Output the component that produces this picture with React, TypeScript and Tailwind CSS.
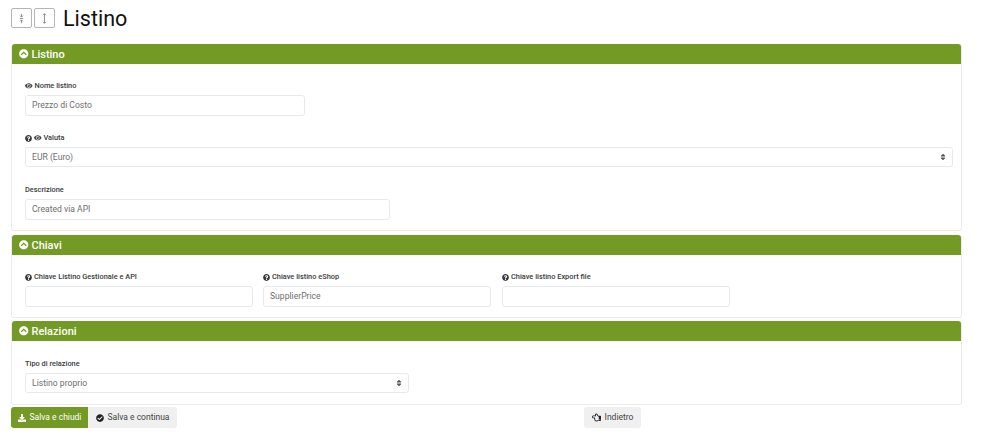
import type { ReactNode } from 'react';
import { FaChevronCircleUp, FaCheckCircle, FaDownload, FaEye, FaQuestionCircle, FaRegHandPointLeft, FaSort } from 'react-icons/fa';

function Panel({ title, className, children }: { title: string; className: string; children: ReactNode }) {
    return (
        <section className={`rounded-[3px] border-x border-b border-[#ececec] bg-white ${className}`}>
            <header className="flex h-[20px] items-center gap-[3px] rounded-t-[3px] bg-[#739a24] pl-[7px] pt-[2px] text-[11px] font-medium text-white">
                <FaChevronCircleUp size={9.5} className="-mt-[2px]" />
                {title}
            </header>
            {children}
        </section>
    );
}

function Label({ help, eye, children }: { help?: boolean; eye?: boolean; children: ReactNode }) {
    return (
        <label className="mb-[4px] flex h-[12px] items-center gap-[2px] pt-[2px] text-[7.4px] font-medium leading-none text-[#3a3a3a]">
            {help && <FaQuestionCircle size={7} />}
            {eye && <FaEye size={7.5} className="text-[#444]" />}
            <span>{children}</span>
        </label>
    );
}

function Field({ value, className, select }: { value?: string; className: string; select?: boolean }) {
    return (
        <div className={`flex items-center justify-between rounded-[3px] border border-[#e8e9ec] bg-white pl-[6px] pr-[5px] text-[8.6px] text-[#6e6e6e] ${className}`}>
            <span>{value}</span>
            {select && <FaSort size={8} className="text-[#555]" />}
        </div>
    );
}

function ToggleIcon({ inward }: { inward?: boolean }) {
    return (
        <svg width="7" height="11" viewBox="0 0 7 11" fill="none" stroke="#777" strokeWidth="0.8">
            {inward ? (
                <>
                    <path d="M3.5 0.8V4M3.5 7V10.2" />
                    <path d="M2 2.6L3.5 4.1L5 2.6" />
                    <path d="M2 8.4L3.5 6.9L5 8.4" />
                    <path d="M1.8 5.5H5.2" />
                </>
            ) : (
                <>
                    <path d="M3.5 0.8V10.2" />
                    <path d="M2 2.2L3.5 0.7L5 2.2" />
                    <path d="M2 8.8L3.5 10.3L5 8.8" />
                </>
            )}
        </svg>
    );
}

export default function App() {
    return (
        <div className="h-[442px] w-[983px] overflow-hidden bg-white pl-[11px] pt-[8px] font-['Roboto',sans-serif]">
            {/* Title */}
            <div className="flex h-[22px] items-start">
                <button className="flex h-[20px] w-[21px] items-center justify-center rounded-[2px] border border-[#b5b5b5]">
                    <ToggleIcon inward />
                </button>
                <button className="ml-[2px] flex h-[20px] w-[21px] items-center justify-center rounded-[2px] border border-[#b5b5b5]">
                    <ToggleIcon />
                </button>
                <h1 className="ml-[8px] text-[21.5px] font-normal leading-[22px] text-[#111]">Listino</h1>
            </div>

            <div className="mt-[14px] w-[951px]">
                <Panel title="Listino" className="h-[187px]">
                    <div className="px-[13px] pt-[15px]">
                        <Label eye>Nome listino</Label>
                        <Field value="Prezzo di Costo" className="h-[21px] w-[280px]" />
                        <div className="mt-[15px]">
                            <Label help eye>Valuta</Label>
                            <Field select value="EUR (Euro)" className="h-[20px] w-[928px]" />
                        </div>
                        <div className="mt-[16px]">
                            <Label>Descrizione</Label>
                            <Field value="Created via API" className="h-[21px] w-[365px]" />
                        </div>
                    </div>
                </Panel>

                <Panel title="Chiavi" className="mt-[4px] h-[83px]">
                    <div className="flex gap-[10px] px-[13px] pt-[15px]">
                        <div>
                            <Label help>Chiave Listino Gestionale e API</Label>
                            <Field className="h-[21px] w-[228px]" />
                        </div>
                        <div>
                            <Label help>Chiave listino eShop</Label>
                            <Field value="SupplierPrice" className="h-[21px] w-[228px]" />
                        </div>
                        <div className="ml-px">
                            <Label help>Chiave listino Export file</Label>
                            <Field className="h-[21px] w-[228px]" />
                        </div>
                    </div>
                </Panel>

                <Panel title="Relazioni" className="mt-[3px] h-[84px]">
                    <div className="px-[13px] pt-[16px]">
                        <Label>Tipo di relazione</Label>
                        <Field select value="Listino proprio" className="h-[20px] w-[384px]" />
                    </div>
                </Panel>
            </div>

            {/* Actions */}
            <div className="mt-[2px] flex h-[21px] w-[630px] items-stretch text-[8.5px]">
                <button className="flex w-[77px] items-center justify-center gap-[4px] rounded-l-[3px] bg-[#739a24] text-white">
                    <FaDownload size={8} />
                    Salva e chiudi
                </button>
                <button className="flex w-[89px] items-center justify-center gap-[4px] rounded-r-[3px] bg-[#f0f0f0] text-[#444]">
                    <FaCheckCircle size={8} className="text-[#222]" />
                    Salva e continua
                </button>
                <button className="ml-auto flex w-[57px] items-center justify-center gap-[4px] rounded-[3px] bg-[#f0f0f0] text-[#444]">
                    <FaRegHandPointLeft size={9} className="text-[#222]" />
                    Indietro
                </button>
            </div>
        </div>
    );
}
